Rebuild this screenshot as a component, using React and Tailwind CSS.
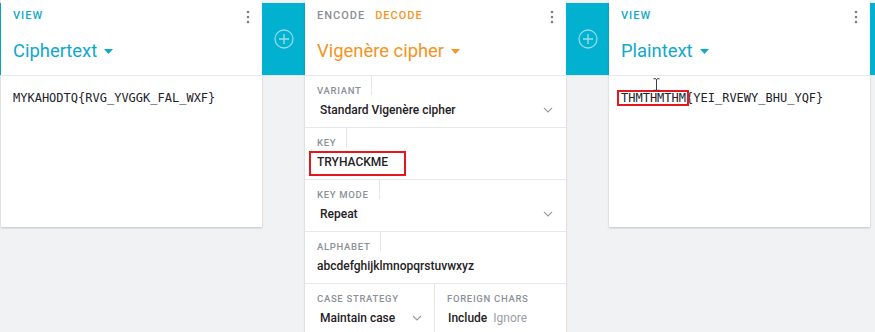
import React from "react";

const TEAL = "bg-[#02b1d0]";

function Plus() {
  return (
    <svg width="20" height="20" viewBox="0 0 20 20" fill="none">
      <circle cx="10" cy="10" r="9" stroke="rgba(255,255,255,0.55)" strokeWidth="1.3" />
      <path d="M10 5v10M5 10h10" stroke="rgba(255,255,255,0.6)" strokeWidth="1.3" />
    </svg>
  );
}

function Dots() {
  return (
    <svg width="4" height="14" viewBox="0 0 4 14" className="mt-[2px]">
      <circle cx="2" cy="2" r="1.3" fill="#7d8288" />
      <circle cx="2" cy="7" r="1.3" fill="#7d8288" />
      <circle cx="2" cy="12" r="1.3" fill="#7d8288" />
    </svg>
  );
}

function Caret({ color }) {
  return (
    <svg width="9" height="5" viewBox="0 0 9 5">
      <path d="M0 0h9L4.5 5z" fill={color} />
    </svg>
  );
}

function Chevron() {
  return (
    <svg width="10" height="6" viewBox="0 0 10 6" fill="none">
      <path d="M1 1l4 4 4-4" stroke="#989ca2" strokeWidth="1.1" />
    </svg>
  );
}

function Pipe({ plus = true, className = "w-[43px]" }) {
  return (
    <div className={`${className} shrink-0 flex flex-col`}>
      <div className={`mt-[3px] h-[72px] ${TEAL} flex items-center justify-center`}>
        {plus && <Plus />}
      </div>
      <div className="h-px bg-[#e3e5e8]" />
    </div>
  );
}

function Header({ children, title, color, caretColor }) {
  return (
    <div className="h-[76px] border-b border-[#e6e7ea] pl-3 pr-[12px] pt-2">
      <div className="flex justify-between items-start">
        <div className="flex gap-[10px] text-[11px] leading-4 font-medium tracking-[1px]">{children}</div>
        <Dots />
      </div>
      <div className={`mt-[15px] flex items-center gap-[7px] text-[18.4px] leading-6 ${color}`}>
        <span>{title}</span>
        <Caret color={caretColor} />
      </div>
    </div>
  );
}

function Label({ children, line = true }) {
  return (
    <div
      className={`w-fit h-[19px] pl-3 pr-[10px] pt-[10px] text-[9.5px] leading-[10px] font-medium tracking-[0.7px] text-[#8b9198] uppercase ${
        line ? "border-r border-[#e4e6e9]" : ""
      }`}
    >
      {children}
    </div>
  );
}

function SelectRow({ label, value }) {
  return (
    <div className="h-[52px] border-b border-[#e6e7ea] shrink-0">
      <Label>{label}</Label>
      <div className="mt-[5px] pl-[15px] pr-[13px] flex items-center justify-between text-[12px] leading-5 font-medium text-[#1f2226]">
        <span>{value}</span>
        <Chevron />
      </div>
    </div>
  );
}

export default function App() {
  const mono = "font-['DejaVu_Sans_Mono',monospace] text-[12px] leading-5 text-[#222428]";
  return (
    <div className="w-[875px] h-[332px] overflow-hidden bg-[#f1f2f4] flex items-start font-['Roboto',sans-serif]">
      <Pipe plus={false} className="w-px" />

      {/* Card 1 */}
      <div className="w-[261px] h-[227px] shrink-0 bg-white shadow-[0_1px_2px_rgba(0,0,0,0.2)] flex flex-col">
        <Header title="Ciphertext" color="text-[#0fa8cd]" caretColor="#0fa8cd">
          <span className="text-[#0fa8cd]">VIEW</span>
        </Header>
        <div className={`px-3 pt-3 ${mono}`}>MYKAHODTQ{"{"}RVG_YVGGK_FAL_WXF{"}"}</div>
      </div>

      <Pipe />

      {/* Card 2 */}
      <div className="w-[261px] h-[400px] shrink-0 bg-white shadow-[0_1px_2px_rgba(0,0,0,0.2)] flex flex-col">
        <Header title="Vigenère cipher" color="text-[#f7931e]" caretColor="#f7931e">
          <span className="text-[#8a8f95]">ENCODE</span>
          <span className="text-[#f7931e]">DECODE</span>
        </Header>
        <SelectRow label="Variant" value="Standard Vigenère cipher" />
        <div className="relative h-[52px] border-b border-[#e6e7ea] shrink-0">
          <Label>Key</Label>
          <div className="mt-[5px] pl-3 text-[12px] leading-5 font-medium text-[#1f2226]">TRYHACKME</div>
          <div className="absolute left-[4px] top-[23px] w-[97px] h-[25px] border-2 border-[#e5161c]" />
        </div>
        <SelectRow label="Key mode" value="Repeat" />
        <div className="h-[52px] border-b border-[#e6e7ea] shrink-0">
          <Label>Alphabet</Label>
          <div className="mt-[5px] pl-3 text-[12px] leading-5 font-medium text-[#1f2226]">
            abcdefghijklmnopqrstuvwxyz
          </div>
        </div>
        <div className="flex h-[52px] shrink-0">
          <div className="w-[130px] border-r border-[#e6e7ea]">
            <Label line={false}>Case strategy</Label>
            <div className="mt-[5px] pl-[15px] pr-[12px] flex items-center justify-between text-[12px] leading-5 font-medium text-[#1f2226]">
              <span>Maintain case</span>
              <Chevron />
            </div>
          </div>
          <div className="flex-1">
            <Label line={false}>Foreign chars</Label>
            <div className="mt-[5px] pl-[13px] flex items-center gap-[6px] text-[12px] leading-5">
              <span className="font-medium text-[#1f2226]">Include</span>
              <span className="text-[#9aa0a6]">Ignore</span>
            </div>
          </div>
        </div>
      </div>

      <Pipe />

      {/* Card 3 */}
      <div className="w-[261px] h-[227px] shrink-0 bg-white shadow-[0_1px_2px_rgba(0,0,0,0.2)] flex flex-col">
        <Header title="Plaintext" color="text-[#0fa8cd]" caretColor="#0fa8cd">
          <span className="text-[#0fa8cd]">VIEW</span>
        </Header>
        <div className="relative flex-1">
          <div className={`px-3 pt-3 ${mono}`}>THMTHMTHM{"{"}YEI_RVEWY_BHU_YQF{"}"}</div>
          <div className="absolute left-[8px] top-[14px] w-[72px] h-[16px] border-2 border-[#e5161c]" />
          <svg className="absolute left-[44px] top-[2px]" width="7" height="13" viewBox="0 0 7 13" fill="none">
            <path d="M0.5 0.75h2.5M4 0.75h2.5M3.5 1v11M0.5 12.25h2.5M4 12.25h2.5" stroke="#3a3d42" strokeWidth="1" />
          </svg>
        </div>
      </div>

      <Pipe plus={false} className="flex-1" />
    </div>
  );
}
